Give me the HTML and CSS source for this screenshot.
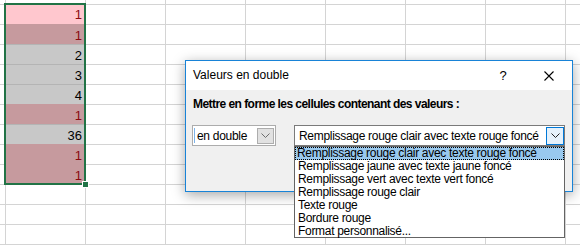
FILE: index.html
```html
<!DOCTYPE html>
<html lang="fr">
<head>
    <meta charset="UTF-8">
    <title>Valeurs en double</title>
    <link rel="stylesheet" href="styles.css">
</head>
<body>
    <div class="sheet">
        <div class="selection">
            <div class="cell dup active">1</div>
            <div class="cell dup">1</div>
            <div class="cell">2</div>
            <div class="cell">3</div>
            <div class="cell">4</div>
            <div class="cell dup">1</div>
            <div class="cell">36</div>
            <div class="cell dup">1</div>
            <div class="cell dup last">1</div>
            <span class="handle"></span>
        </div>
    </div>

    <div class="dialog">
        <div class="titlebar">
            <span class="title">Valeurs en double</span>
            <span class="tbtn">?</span>
            <span class="tbtn close">
                <svg width="10" height="10" viewBox="0 0 10 10"><path d="M0.5 0.5 L9.5 9.5 M9.5 0.5 L0.5 9.5" stroke="#000" stroke-width="1.1" fill="none"/></svg>
            </span>
        </div>
        <div class="dbody">
            <div class="label">Mettre en forme les cellules contenant des valeurs :</div>
            <div class="row">
                <div class="combo small">
                    <span class="caret"></span>
                    <span class="ctext">en double</span>
                    <span class="cbtn">
                        <svg width="9" height="5" viewBox="0 0 9 5"><path d="M0.5 0.5 L4.5 4.5 L8.5 0.5" stroke="#6d6d6d" fill="none"/></svg>
                    </span>
                </div>
                <div class="combo wide">
                    <span class="ctext">Remplissage rouge clair avec texte rouge foncé</span>
                    <span class="cbtn hot">
                        <svg width="9" height="5" viewBox="0 0 9 5"><path d="M0.5 0.5 L4.5 4.5 L8.5 0.5" stroke="#222" fill="none"/></svg>
                    </span>
                </div>
            </div>
        </div>
    </div>

    <ul class="list">
        <li class="sel">Remplissage rouge clair avec texte rouge foncé</li>
        <li>Remplissage jaune avec texte jaune foncé</li>
        <li>Remplissage vert avec texte vert foncé</li>
        <li>Remplissage rouge clair</li>
        <li>Texte rouge</li>
        <li>Bordure rouge</li>
        <li>Format personnalisé...</li>
    </ul>
</body>
</html>
```

FILE: styles.css
```css
*{
    margin: 0;
    padding: 0;
    box-sizing: border-box;
}
ul,li{
    list-style: none;
}
body{
    width: 580px;
    height: 245px;
    overflow: hidden;
    font-family: "Liberation Sans", Arial, sans-serif;
    font-size: 12px;
    color: #000;
    background-color: #fff;
    /* quadrillage de la feuille */
    background-image:
        linear-gradient(to right, #d4d4d4 1px, transparent 1px),
        linear-gradient(to bottom, #d4d4d4 1px, transparent 1px);
    background-size: 80px 20px;
    background-position: 5px 4px;
}
.sheet{
    padding: 3px 0 0 4px;
}
.selection{
    position: relative;
    width: 82px;
    border: 2px solid #217346;
}
.cell{
    height: 20px;
    line-height: 22px;
    padding-right: 2px;
    text-align: right;
    font-family: "Liberation Sans", Arial, sans-serif;
    font-size: 13px;
    color: #000;
    background: #c8c8c8;
    border-top: 1px solid #b4b4b4;
}
.cell.dup{
    color: #8a0a10;
    background: #c69a9e;
    border-top-color: #c69a9e;
}
.cell.active{
    height: 19px;
    line-height: 20px;
    background: #ffc7ce;
    border-top: 0;
}
.cell.last{
    height: 19px;
}
.handle{
    position: absolute;
    left: 76px;
    top: 176px;
    width: 7px;
    height: 7px;
    background: #217346;
    border: 1px solid #fff;
}
.dialog{
    position: absolute;
    left: 185px;
    top: 60px;
    width: 388px;
    height: 132px;
    border: 1px solid #1883d7;
    background: #f0f0f0;
    box-shadow: 0 3px 12px rgba(0,0,0,0.35);
}
.titlebar{
    display: flex;
    height: 29px;
    line-height: 29px;
    background: #fff;
}
.title{
    flex: 1;
    padding-left: 7px;
}
.tbtn{
    width: 46px;
    text-align: center;
    font-size: 13px;
}
.close{
    display: flex;
    align-items: center;
    justify-content: center;
}
.dbody{
    padding: 6px 0 0 7px;
}
.label{
    font-weight: bold;
    line-height: 16px;
    letter-spacing: -0.55px;
}
.row{
    display: flex;
    gap: 18px;
    margin-top: 13px;
    margin-left: -1px;
}
.combo{
    position: relative;
    display: flex;
    align-items: center;
    height: 21px;
    background: #fff;
    border: 1px solid #acacac;
}
.combo.small{
    width: 84px;
}
.combo.wide{
    width: 271px;
    border-color: #7a7a7a;
}
.ctext{
    flex: 1;
    padding-left: 4px;
    white-space: nowrap;
    letter-spacing: -0.3px;
}
.caret{
    position: absolute;
    left: 1px;
    top: 2px;
    width: 1px;
    height: 15px;
    background: #7eb4ea;
}
.cbtn{
    display: flex;
    align-items: center;
    justify-content: center;
    width: 17px;
    height: 16px;
    margin-right: 1px;
    background: #e1e1e1;
    border: 1px solid #adadad;
}
.cbtn.hot{
    width: 18px;
    height: 18px;
    margin-right: 0;
    background: #e5f1fb;
    border-color: #0078d7;
}
.list{
    position: absolute;
    left: 294px;
    top: 146px;
    width: 271px;
    height: 92px;
    background: #fff;
    border: 1px solid #646464;
}
.list li{
    height: 13px;
    line-height: 13px;
    padding-left: 3px;
    white-space: nowrap;
    letter-spacing: -0.3px;
}
.list li.sel{
    background: #99c9ef;
    outline: 1px dotted #000;
    outline-offset: -1px;
    padding-left: 2px;
}
```
